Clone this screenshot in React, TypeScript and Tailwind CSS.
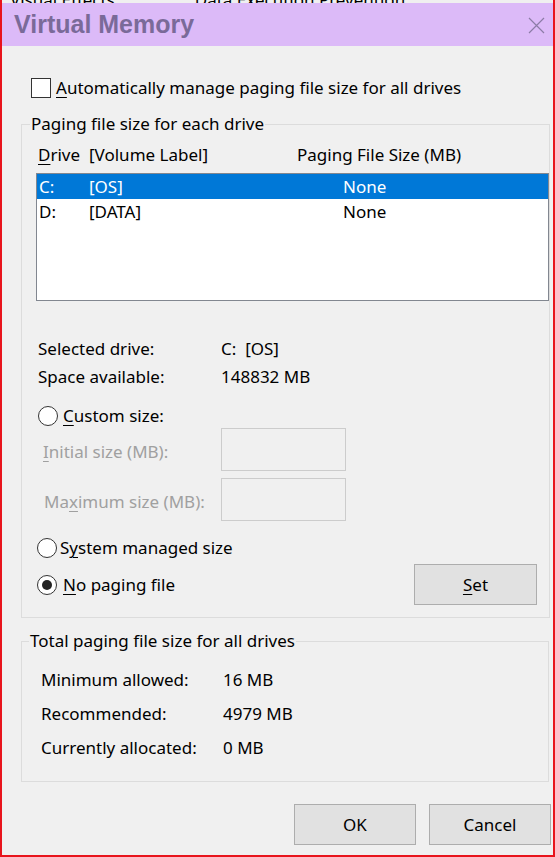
import type { ReactNode } from 'react'

const font = { fontFamily: '"Noto Sans", "Open Sans", sans-serif' }

function U({ children }: { children: ReactNode }) {
  return <span className="underline underline-offset-[3px] decoration-1">{children}</span>
}

function Radio({ checked }: { checked?: boolean }) {
  return (
    <span className="flex h-[20px] w-[20px] shrink-0 items-center justify-center rounded-full border border-[#333] bg-white">
      {checked && <span className="h-[10px] w-[10px] rounded-full bg-[#222]" />}
    </span>
  )
}

function Button({ children, className = '' }: { children: ReactNode; className?: string }) {
  return (
    <div className={`flex items-center justify-center border border-[#adadad] bg-[#e1e1e1] text-[17px] text-black ${className}`}>
      {children}
    </div>
  )
}

const drives = [
  { letter: 'C:', label: '[OS]', size: 'None', selected: true },
  { letter: 'D:', label: '[DATA]', size: 'None', selected: false },
]

export default function App() {
  return (
    <div className="h-[857px] w-[555px] overflow-hidden bg-white" style={font}>
      <div className="flex h-[857px] w-[555px] flex-col border-x-2 border-b-2 border-[#e8141c]">
        {/* window behind, barely visible */}
        <div className="h-[3px] overflow-hidden bg-[#f0f0f0]">
          <div className="-mt-[13px] flex gap-[80px] pl-[8px] text-[17px] text-black">
            <span>Visual Effects</span>
            <span>Data Execution Prevention</span>
          </div>
        </div>

        <div className="flex h-[43px] items-center justify-between bg-[#dcbaf8] pl-[12px] pr-[8px]">
          <span className="text-[25px] font-bold text-[#7a6a99]" style={{ fontFamily: '"Liberation Sans", Arial, sans-serif' }}>
            Virtual Memory
          </span>
          <svg width="17" height="17" viewBox="0 0 17 17" className="mt-[1px]">
            <path d="M1 1 L16 16 M16 1 L1 16" stroke="#8c7ca6" strokeWidth="1.2" fill="none" />
          </svg>
        </div>

        <div className="flex flex-1 flex-col bg-[#f0f0f0] text-[17px] text-black">
          <div className="mt-[30px] flex h-[24px] items-center gap-[5px] pl-[29px]">
            <span className="h-[20px] w-[20px] border border-[#333] bg-white" />
            <span>
              <U>A</U>utomatically manage paging file size for all drives
            </span>
          </div>

          <fieldset className="ml-[19px] mt-[12px] w-[528px] border border-[#dcdcdc] pb-[12px]">
            <legend className="ml-[8px] h-[24px] px-[1px] leading-[24px]">Paging file size for each drive</legend>

            <div className="mt-[7px] flex h-[24px] items-center pl-[16px]">
              <span className="w-[51px]">
                <U>D</U>rive
              </span>
              <span className="w-[208px]">[Volume Label]</span>
              <span>Paging File Size (MB)</span>
            </div>

            <div className="ml-[14px] mt-[6px] h-[128px] w-[513px] border border-[#828790] bg-white">
              {drives.map((d) => (
                <div
                  key={d.letter}
                  className={`flex h-[25px] items-center pl-[2px] ${d.selected ? 'bg-[#0078d7] text-white' : ''}`}
                >
                  <span className="w-[50px]">{d.letter}</span>
                  <span className="w-[254px]">{d.label}</span>
                  <span>{d.size}</span>
                </div>
              ))}
            </div>

            <div className="mt-[34px] pl-[16px]">
              <div className="flex h-[28px] items-center">
                <span className="w-[183px]">Selected drive:</span>
                <span>C:&nbsp;&nbsp;[OS]</span>
              </div>
              <div className="flex h-[28px] items-center">
                <span className="w-[183px]">Space available:</span>
                <span>148832 MB</span>
              </div>
            </div>

            <div className="mt-[13px] flex h-[24px] items-center gap-[5px] pl-[16px]">
              <Radio />
              <span>
                <U>C</U>ustom size:
              </span>
            </div>

            <div className="flex h-[43px] items-center text-[#a0a0a0]">
              <span className="w-[199px] pl-[21px] pt-[5px]">
                <U>I</U>nitial size (MB):
              </span>
              <span className="h-[43px] w-[125px] border border-[#cccccc]" />
            </div>
            <div className="mt-[7px] flex h-[43px] items-center text-[#a0a0a0]">
              <span className="w-[199px] pl-[22px] pt-[5px]">
                Ma<U>x</U>imum size (MB):
              </span>
              <span className="h-[43px] w-[125px] border border-[#cccccc]" />
            </div>

            <div className="mt-[15px] flex h-[24px] items-center gap-[3px] pl-[15px]">
              <Radio />
              <span>
                S<U>y</U>stem managed size
              </span>
            </div>

            <div className="mt-[4px] flex h-[41px] items-center justify-between pl-[15px] pr-[12px]">
              <div className="flex items-center gap-[6px]">
                <Radio checked />
                <span>
                  <U>N</U>o paging file
                </span>
              </div>
              <Button className="h-[41px] w-[123px]">
                <U>S</U>et
              </Button>
            </div>
          </fieldset>

          <fieldset className="ml-[19px] mt-[11px] w-[528px] border border-[#dcdcdc] pb-[16px]">
            <legend className="ml-[7px] h-[24px] px-[1px] leading-[24px]">Total paging file size for all drives</legend>
            <div className="mt-[10px] pl-[19px]">
              {[
                ['Minimum allowed:', '16 MB'],
                ['Recommended:', '4979 MB'],
                ['Currently allocated:', '0 MB'],
              ].map(([k, v]) => (
                <div key={k} className="flex h-[34px] items-center">
                  <span className="w-[182px]">{k}</span>
                  <span>{v}</span>
                </div>
              ))}
            </div>
          </fieldset>

          <div className="mt-[22px] flex justify-end gap-[13px] pr-[2px]">
            <Button className="h-[41px] w-[122px]">OK</Button>
            <Button className="h-[41px] w-[122px]">Cancel</Button>
          </div>
        </div>
      </div>
    </div>
  )
}
